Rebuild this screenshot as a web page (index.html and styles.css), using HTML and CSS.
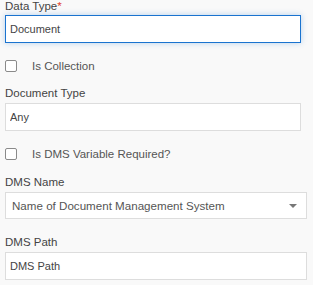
FILE: index.html
```html
<!DOCTYPE html>
<html lang="en">
<head>
<meta charset="UTF-8">
<meta name="viewport" content="width=device-width, initial-scale=1.0">
<title>Variable Settings</title>
<link rel="stylesheet" href="styles.css">
</head>
<body>
<div class="form">
    <div class="field field-first">
        <label class="field-label" for="dataType">Data Type<span class="required">*</span></label>
        <input type="text" id="dataType" class="text-input focused" value="Document">
    </div>
    <div class="check-row check-first">
        <input type="checkbox" id="isCollection">
        <label for="isCollection">Is Collection</label>
    </div>
    <div class="field field-doc">
        <label class="field-label" for="docType">Document Type</label>
        <input type="text" id="docType" class="text-input" value="Any">
    </div>
    <div class="check-row check-second">
        <input type="checkbox" id="dmsRequired">
        <label for="dmsRequired">Is DMS Variable Required?</label>
    </div>
    <div class="field field-name">
        <label class="field-label" for="dmsName">DMS Name</label>
        <div class="select-box" id="dmsName">
            <span>Name of Document Management System</span>
            <span class="caret"></span>
        </div>
    </div>
    <div class="field field-path">
        <label class="field-label" for="dmsPath">DMS Path</label>
        <input type="text" id="dmsPath" class="text-input wide" value="DMS Path">
    </div>
</div>
</body>
</html>
```

FILE: styles.css
```css
body {
    margin: 0;
    padding: 0;
    background-color: #f9f9f9;
    font-family: 'Liberation Sans', Arial, sans-serif;
    color: #444;
}

.form {
    padding: 0 5px;
}

.field-label {
    display: block;
    font-size: 11.5px;
    line-height: 12px;
    color: #444;
}

.required {
    color: #e0432f;
}

.text-input {
    display: block;
    box-sizing: border-box;
    width: 296px;
    height: 28px;
    margin: 4px 0 0;
    padding: 0 4px;
    border: 1px solid #ddd;
    border-radius: 0;
    background-color: #fff;
    font-family: 'Liberation Sans', Arial, sans-serif;
    font-size: 11px;
    color: #444;
    outline: none;
}

.text-input.wide {
    width: 302px;
}

.text-input.focused {
    margin-top: 3px;
    border-color: #1a73cf;
    box-shadow: 0 0 6px rgba(26, 115, 207, 0.3);
}

.check-row {
    display: flex;
    align-items: center;
    height: 14px;
    font-size: 11.5px;
    color: #555;
}

.check-row input {
    appearance: none;
    box-sizing: border-box;
    width: 12px;
    height: 12px;
    margin: 0 15px 0 0;
    border: 1px solid #8a8a8a;
    border-radius: 2px;
    background-color: #fff;
}

.check-first {
    margin-top: 16px;
}

.field-doc {
    margin-top: 14px;
}

.check-second {
    margin-top: 16px;
}

.field-name {
    margin-top: 15px;
}

.select-box {
    display: flex;
    align-items: center;
    justify-content: space-between;
    box-sizing: border-box;
    width: 302px;
    height: 27px;
    margin-top: 4px;
    padding: 0 9px 0 6px;
    border: 1px solid #ddd;
    background-color: #fff;
    font-size: 11.6px;
    color: #555;
}

.caret {
    width: 0;
    height: 0;
    border-left: 4.5px solid transparent;
    border-right: 4.5px solid transparent;
    border-top: 4px solid #777;
}

.field-path {
    margin-top: 17px;
}
```
